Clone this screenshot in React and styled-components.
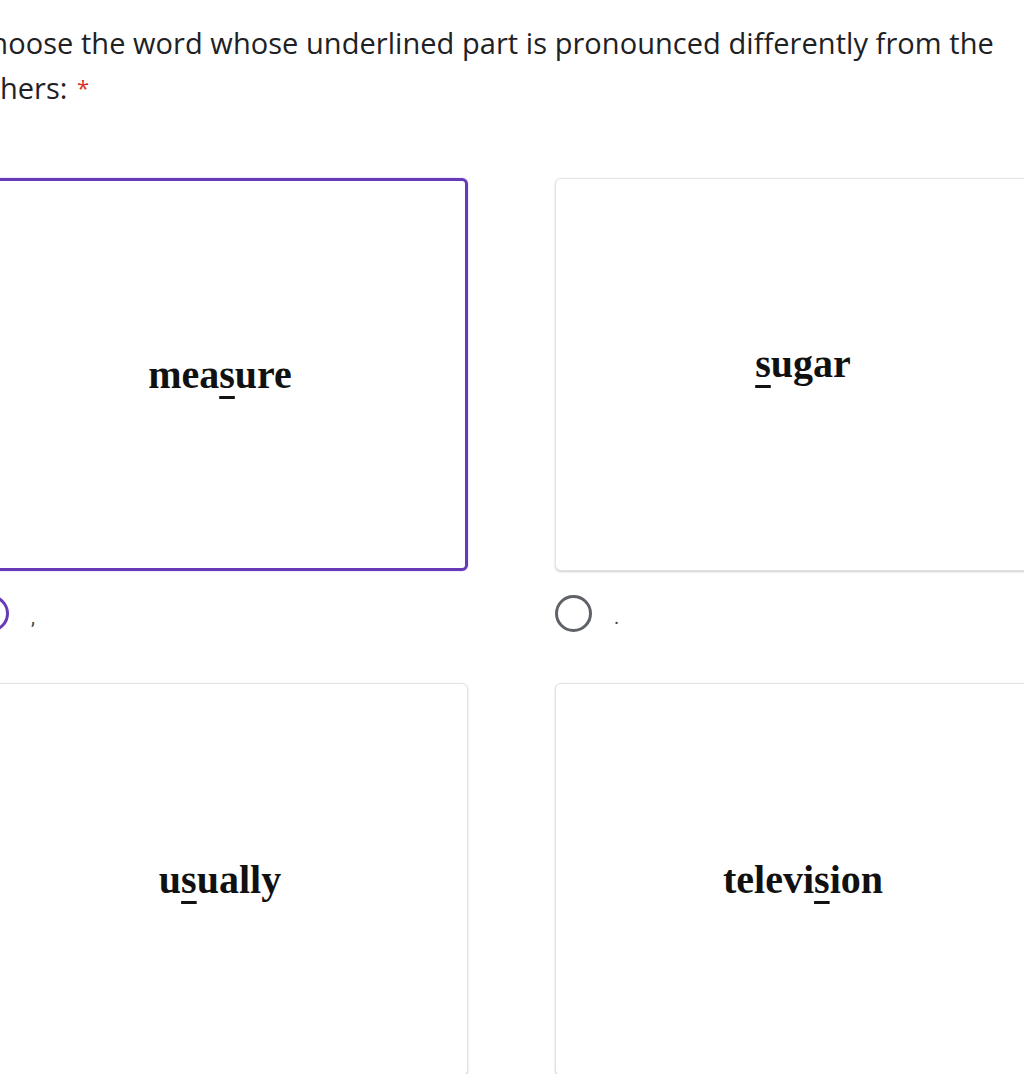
import React from 'react';
import styled, { createGlobalStyle } from 'styled-components';

//Global
const GlobalStyle = createGlobalStyle`
	html, body {
		margin: 0;
		padding: 0;
		background: #ffffff;
		overflow: hidden;
	}
	body {
		font-family: Roboto, 'Open Sans', Arial, sans-serif;
		color: #202124;
	}
`;

//Data
const options = [
	{ id: 1, before: 'mea', mark: 's', after: 'ure', label: ',', checked: true, lift: 0 },
	{ id: 2, before: '', mark: 's', after: 'ugar', label: '.', checked: false, lift: 22 },
	{ id: 3, before: 'u', mark: 's', after: 'ually', label: '', checked: false, lift: 0 },
	{ id: 4, before: 'televi', mark: 's', after: 'ion', label: '', checked: false, lift: 0 },
];

const App = () => {
	return (
		<>
			<GlobalStyle />
			<StylePage>
				<StyleQuestion>
					Choose the word whose underlined part is pronounced differently from the
					others: <StyleRequired>*</StyleRequired>
				</StyleQuestion>
				<StyleGrid>
					{options.map((option) => (
						<StyleOption key={option.id}>
							<StyleCard selected={option.checked} lift={option.lift}>
								<StyleWord>
									{option.before}
									<StyleMark>{option.mark}</StyleMark>
									{option.after}
								</StyleWord>
							</StyleCard>
							<StyleRadioRow>
								<StyleRadio checked={option.checked} />
								<StyleLabel>{option.label}</StyleLabel>
							</StyleRadioRow>
						</StyleOption>
					))}
				</StyleGrid>
			</StylePage>
		</>
	);
};

const StylePage = styled.div`
	margin-left: -28px;
	width: 1200px;
`;

const StyleQuestion = styled.div`
	padding-top: 20px;
	width: 1036px;
	font-family: 'Open Sans', Roboto, Arial, sans-serif;
	font-size: 29px;
	line-height: 45px;
	letter-spacing: 0.05px;
	color: #202124;
`;

const StyleRequired = styled.span`
	color: #d93025;
	font-size: 22px;
	margin-left: 2px;
	vertical-align: 3px;
`;

const StyleGrid = styled.div`
	display: grid;
	grid-template-columns: 496px 496px;
	column-gap: 87px;
	row-gap: 52px;
	margin-top: 68px;
`;

const StyleOption = styled.div`
	display: flex;
	flex-direction: column;
`;

const StyleCard = styled.div`
	box-sizing: border-box;
	height: 393px;
	border-radius: 6px;
	background: #ffffff;
	display: flex;
	align-items: center;
	justify-content: center;
	padding-bottom: ${(p) => p.lift}px;
	border: ${(p) => (p.selected ? '3px solid #673ab7' : '1px solid #e3e3e3')};
	box-shadow: ${(p) =>
		p.selected
			? '0 0 2px rgba(103, 58, 183, 0.35)'
			: '0 1px 2px rgba(60, 64, 67, 0.25)'};
`;

const StyleWord = styled.div`
	font-family: 'Liberation Serif', 'Times New Roman', serif;
	font-weight: bold;
	font-size: 40px;
	color: #111111;
`;

const StyleMark = styled.span`
	text-decoration: underline;
	text-decoration-thickness: 3px;
	text-underline-offset: 8px;
`;

const StyleRadioRow = styled.div`
	display: flex;
	align-items: center;
	gap: 22px;
	margin-top: 24px;
	height: 36px;
`;

const StyleRadio = styled.div`
	box-sizing: border-box;
	width: 37px;
	height: 37px;
	border-radius: 50%;
	border: 3px solid ${(p) => (p.checked ? '#673ab7' : '#5f6368')};
	display: flex;
	align-items: center;
	justify-content: center;
	&::after {
		content: '';
		width: 16px;
		height: 16px;
		border-radius: 50%;
		background: #673ab7;
		display: ${(p) => (p.checked ? 'block' : 'none')};
	}
`;

const StyleLabel = styled.span`
	font-size: 20px;
	color: #444746;
	line-height: 36px;
	padding-top: 8px;
`;

export default App;
